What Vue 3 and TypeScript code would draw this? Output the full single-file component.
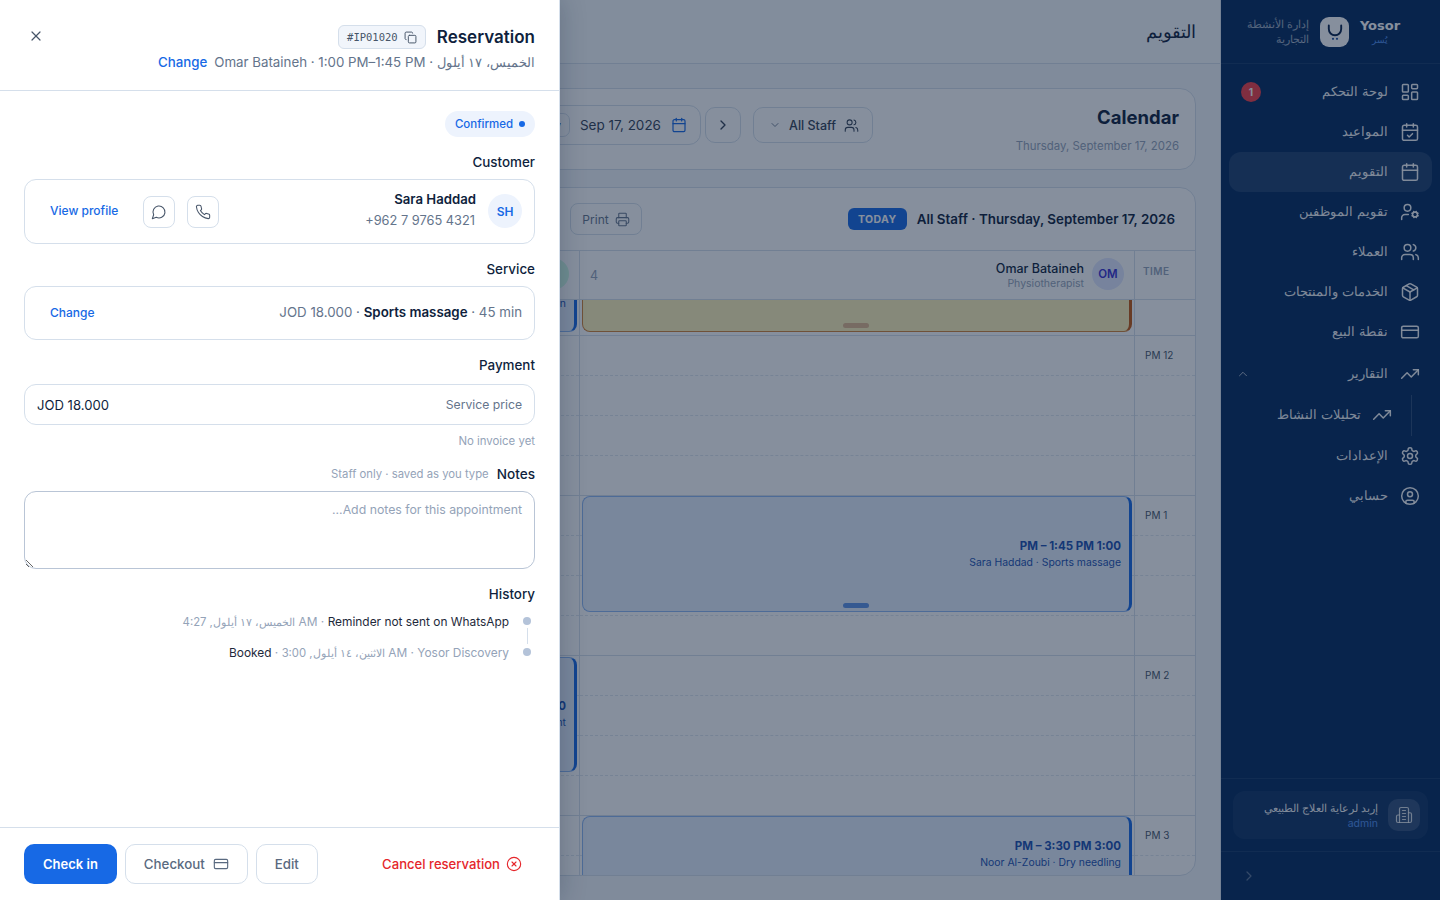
<script setup lang="ts">
import { h } from 'vue'

const icons: Record<string, string> = {
  dashboard: '<rect x="3" y="3" width="7" height="9" rx="1"/><rect x="14" y="3" width="7" height="5" rx="1"/><rect x="14" y="12" width="7" height="9" rx="1"/><rect x="3" y="16" width="7" height="5" rx="1"/>',
  calendarCheck: '<path d="M8 2v4"/><path d="M16 2v4"/><rect x="3" y="4" width="18" height="18" rx="2"/><path d="M3 10h18"/><path d="m9 16 2 2 4-4"/>',
  calendar: '<path d="M8 2v4"/><path d="M16 2v4"/><rect x="3" y="4" width="18" height="18" rx="2"/><path d="M3 10h18"/>',
  userCog: '<path d="M10 15H6a4 4 0 0 0-4 4v2"/><circle cx="9" cy="7" r="4"/><circle cx="18" cy="15" r="3"/><path d="m21.7 16.4-.9-.3"/><path d="m15.2 13.9-.9-.3"/><path d="m16.6 18.7.3-.9"/><path d="m19.1 12.2.3-.9"/><path d="m19.6 18.7-.4-1"/><path d="m16.8 12.3-.4-1"/><path d="m14.3 16.6 1-.4"/><path d="m20.7 13.8 1-.4"/>',
  users: '<path d="M16 21v-2a4 4 0 0 0-4-4H6a4 4 0 0 0-4 4v2"/><circle cx="9" cy="7" r="4"/><path d="M22 21v-2a4 4 0 0 0-3-3.87"/><path d="M16 3.13a4 4 0 0 1 0 7.75"/>',
  package: '<path d="M21 8a2 2 0 0 0-1-1.73l-7-4a2 2 0 0 0-2 0l-7 4A2 2 0 0 0 3 8v8a2 2 0 0 0 1 1.73l7 4a2 2 0 0 0 2 0l7-4A2 2 0 0 0 21 16Z"/><path d="m3.3 7 8.7 5 8.7-5"/><path d="M12 22V12"/><path d="m7.5 4.27 9 5.15"/>',
  card: '<rect x="2" y="5" width="20" height="14" rx="2"/><path d="M2 10h20"/>',
  trending: '<path d="m22 7-8.5 8.5-5-5L2 17"/><path d="M16 7h6v6"/>',
  settings: '<path d="M12.22 2h-.44a2 2 0 0 0-2 2v.18a2 2 0 0 1-1 1.73l-.43.25a2 2 0 0 1-2 0l-.15-.08a2 2 0 0 0-2.73.73l-.22.38a2 2 0 0 0 .73 2.73l.15.1a2 2 0 0 1 1 1.72v.51a2 2 0 0 1-1 1.74l-.15.09a2 2 0 0 0-.73 2.73l.22.38a2 2 0 0 0 2.73.73l.15-.08a2 2 0 0 1 2 0l.43.25a2 2 0 0 1 1 1.73V20a2 2 0 0 0 2 2h.44a2 2 0 0 0 2-2v-.18a2 2 0 0 1 1-1.73l.43-.25a2 2 0 0 1 2 0l.15.08a2 2 0 0 0 2.73-.73l.22-.39a2 2 0 0 0-.73-2.73l-.15-.08a2 2 0 0 1-1-1.74v-.5a2 2 0 0 1 1-1.74l.15-.09a2 2 0 0 0 .73-2.73l-.22-.38a2 2 0 0 0-2.73-.73l-.15.08a2 2 0 0 1-2 0l-.43-.25a2 2 0 0 1-1-1.73V4a2 2 0 0 0-2-2z"/><circle cx="12" cy="12" r="3"/>',
  account: '<circle cx="12" cy="12" r="10"/><circle cx="12" cy="10" r="3"/><path d="M7 20.662V19a2 2 0 0 1 2-2h6a2 2 0 0 1 2 2v1.662"/>',
  building: '<path d="M6 22V4a2 2 0 0 1 2-2h8a2 2 0 0 1 2 2v18Z"/><path d="M6 12H4a2 2 0 0 0-2 2v6a2 2 0 0 0 2 2h2"/><path d="M18 9h2a2 2 0 0 1 2 2v9a2 2 0 0 1-2 2h-2"/><path d="M10 6h4"/><path d="M10 10h4"/><path d="M10 14h4"/><path d="M10 18h4"/>',
  message: '<path d="M7.9 20A9 9 0 1 0 4 16.1L2 22Z"/>',
  phone: '<path d="M22 16.92v3a2 2 0 0 1-2.18 2 19.79 19.79 0 0 1-8.63-3.07 19.5 19.5 0 0 1-6-6 19.79 19.79 0 0 1-3.07-8.67A2 2 0 0 1 4.11 2h3a2 2 0 0 1 2 1.72 12.84 12.84 0 0 0 .7 2.81 2 2 0 0 1-.45 2.11L8.09 9.91a16 16 0 0 0 6 6l1.27-1.27a2 2 0 0 1 2.11-.45 12.84 12.84 0 0 0 2.81.7A2 2 0 0 1 22 16.92z"/>',
  copy: '<rect x="8" y="8" width="14" height="14" rx="2"/><path d="M4 16c-1.1 0-2-.9-2-2V4c0-1.1.9-2 2-2h10c1.1 0 2 .9 2 2"/>',
  circleX: '<circle cx="12" cy="12" r="10"/><path d="m15 9-6 6"/><path d="m9 9 6 6"/>',
  printer: '<path d="M6 18H4a2 2 0 0 1-2-2v-5a2 2 0 0 1 2-2h16a2 2 0 0 1 2 2v5a2 2 0 0 1-2 2h-2"/><path d="M6 9V3a1 1 0 0 1 1-1h10a1 1 0 0 1 1 1v6"/><rect x="6" y="14" width="12" height="8" rx="1"/>',
  x: '<path d="M18 6 6 18"/><path d="m6 6 12 12"/>',
  chevronUp: '<path d="m18 15-6-6-6 6"/>',
  chevronDown: '<path d="m6 9 6 6 6-6"/>',
  chevronRight: '<path d="m9 18 6-6-6-6"/>'
}

const Icon = (props: { name: string; size?: number; stroke?: number }) =>
  h('svg', {
    width: props.size ?? 16,
    height: props.size ?? 16,
    viewBox: '0 0 24 24',
    fill: 'none',
    stroke: 'currentColor',
    'stroke-width': props.stroke ?? 2,
    'stroke-linecap': 'round',
    'stroke-linejoin': 'round',
    style: 'flex:none;display:block',
    innerHTML: icons[props.name]
  })

interface NavItem {
  label: string
  icon: string
  active?: boolean
  badge?: number
}

const navItems: NavItem[] = [
  { label: 'لوحة التحكم', icon: 'dashboard', badge: 1 },
  { label: 'المواعيد', icon: 'calendarCheck' },
  { label: 'التقويم', icon: 'calendar', active: true },
  { label: 'تقويم الموظفين', icon: 'userCog' },
  { label: 'العملاء', icon: 'users' },
  { label: 'الخدمات والمنتجات', icon: 'package' },
  { label: 'نقطة البيع', icon: 'card' }
]

const hours = [
  { label: '', slots: [36] },
  { label: '12 PM', slots: [40, 40, 40, 40] },
  { label: '1 PM', slots: [40, 40, 40, 40] },
  { label: '2 PM', slots: [40, 40, 40, 40] },
  { label: '3 PM', slots: [40, 40, 40, 40] }
]

interface CalEvent {
  time: string
  who: string
  top: number
  height: number
  tone: 'blue' | 'amber'
  handle?: boolean
}

const omarEvents: CalEvent[] = [
  { time: '', who: '', top: -61, height: 93, tone: 'amber', handle: true },
  { time: '1:00 PM – 1:45 PM', who: 'Sara Haddad · Sports massage', top: 196, height: 116, tone: 'blue', handle: true },
  { time: '3:00 PM – 3:30 PM', who: 'Noor Al-Zoubi · Dry needling', top: 516, height: 76, tone: 'blue' }
]

const otherEvents: CalEvent[] = [
  { time: '', who: 'n', top: -26, height: 58, tone: 'blue' },
  { time: '2:00', who: 'nt', top: 357, height: 115, tone: 'blue' }
]
</script>

<template>
  <div class="app">
    <aside class="sidebar">
      <div class="brand">
        <div class="brand-name">
          <span class="brand-en">Yosor</span>
          <span class="brand-ar">يُسر</span>
        </div>
        <div class="logo">
          <svg width="18" height="20" viewBox="0 0 18 20" fill="none">
            <path d="M2.8 3.5v3.6a6.2 6.2 0 0 0 12.4 0V3.5" stroke="#06214a" stroke-width="1.9" stroke-linecap="round" />
            <circle cx="7" cy="16.8" r="1.1" fill="#1d4e9c" />
            <circle cx="11" cy="16.8" r="1.1" fill="#1d4e9c" />
          </svg>
        </div>
        <div class="brand-tag">إدارة الأنشطة<br />التجارية</div>
      </div>

      <nav class="nav">
        <a v-for="item in navItems" :key="item.label" class="nav-item" :class="{ active: item.active }">
          <Icon :name="item.icon" :size="20" :stroke="1.8" />
          <span class="nav-label">{{ item.label }}</span>
          <span v-if="item.badge" class="nav-badge">{{ item.badge }}</span>
        </a>
        <a class="nav-item group-head">
          <Icon name="trending" :size="20" :stroke="1.8" />
          <span class="nav-label">التقارير</span>
          <span class="nav-caret"><Icon name="chevronUp" :size="14" :stroke="1.6" /></span>
        </a>
        <div class="subnav">
          <a class="nav-item sub-item">
            <Icon name="trending" :size="20" :stroke="1.8" />
            <span class="nav-label">تحليلات النشاط</span>
          </a>
        </div>
        <a class="nav-item">
          <Icon name="settings" :size="20" :stroke="1.8" />
          <span class="nav-label">الإعدادات</span>
        </a>
        <a class="nav-item">
          <Icon name="account" :size="20" :stroke="1.8" />
          <span class="nav-label">حسابي</span>
        </a>
      </nav>

      <div class="tenant-wrap">
        <div class="tenant">
          <div class="tenant-icon"><Icon name="building" :size="18" :stroke="1.6" /></div>
          <div class="tenant-text">
            <div class="tenant-name">إربد لرعاية العلاج الطبيعي</div>
            <div class="tenant-role">admin</div>
          </div>
        </div>
      </div>
      <div class="collapse"><Icon name="chevronRight" :size="16" :stroke="1.8" /></div>
    </aside>

    <main class="main">
      <header class="topbar">
        <h1>التقويم</h1>
      </header>

      <div class="content">
        <section class="toolbar">
          <div class="toolbar-title">
            <h2>Calendar</h2>
            <p>Thursday, September 17, 2026</p>
          </div>
          <div class="toolbar-controls">
            <button class="btn-ghost staff-select">
              <Icon name="users" :size="15" :stroke="1.7" />
              <span>All Staff</span>
              <span class="select-caret"><Icon name="chevronDown" :size="12" :stroke="1.8" /></span>
            </button>
            <button class="btn-ghost square"><Icon name="chevronRight" :size="16" /></button>
            <div class="date-chip">
              <span class="date-icon"><Icon name="calendar" :size="16" :stroke="1.8" /></span>
              <span class="date-text">Sep 17, 2026</span>
              <button class="today-btn">Today</button>
            </div>
          </div>
        </section>

        <section class="schedule">
          <div class="schedule-head">
            <div class="schedule-title">
              <strong>All Staff · Thursday, September 17, 2026</strong>
              <span class="today-badge">TODAY</span>
            </div>
            <div class="schedule-actions">
              <button class="btn-print">
                <Icon name="printer" :size="15" :stroke="1.7" />
                <span>Print</span>
              </button>
            </div>
          </div>

          <div class="columns">
            <div class="col-time col-head"><span class="time-head">TIME</span></div>
            <div class="col-head staff-head">
              <span class="avatar-sm violet">OM</span>
              <div class="staff-text">
                <div class="staff-name">Omar Bataineh</div>
                <div class="staff-role">Physiotherapist</div>
              </div>
              <span class="staff-count">4</span>
            </div>
            <div class="col-head staff-head">
              <span class="avatar-sm teal"></span>
            </div>
          </div>

          <div class="grid-body">
            <div class="columns">
              <div class="col-time">
                <div v-for="hour in hours" :key="hour.label" class="hour">
                  <div v-for="(slot, i) in hour.slots" :key="i" class="slot" :style="{ height: slot + 'px' }">
                    <span v-if="i === 0 && hour.label" class="hour-label">{{ hour.label }}</span>
                  </div>
                </div>
              </div>
              <div class="col-staff">
                <div v-for="hour in hours" :key="hour.label" class="hour">
                  <div v-for="(slot, i) in hour.slots" :key="i" class="slot" :style="{ height: slot + 'px' }"></div>
                </div>
                <div
                  v-for="ev in omarEvents"
                  :key="ev.top"
                  class="event"
                  :class="ev.tone"
                  :style="{ top: ev.top + 'px', height: ev.height + 'px' }"
                >
                  <div class="ev-time">{{ ev.time }}</div>
                  <div class="ev-who">{{ ev.who }}</div>
                  <span v-if="ev.handle" class="ev-handle"></span>
                </div>
              </div>
              <div class="col-staff">
                <div v-for="hour in hours" :key="hour.label" class="hour">
                  <div v-for="(slot, i) in hour.slots" :key="i" class="slot" :style="{ height: slot + 'px' }"></div>
                </div>
                <div
                  v-for="ev in otherEvents"
                  :key="ev.top"
                  class="event"
                  :class="ev.tone"
                  :style="{ top: ev.top + 'px', height: ev.height + 'px' }"
                >
                  <div class="ev-time">{{ ev.time }}</div>
                  <div class="ev-who">{{ ev.who }}</div>
                </div>
              </div>
            </div>
          </div>
        </section>
      </div>
    </main>

    <div class="scrim"></div>

    <aside class="drawer">
      <header class="drawer-head">
        <div class="head-row">
          <h3>Reservation</h3>
          <span class="code-chip">
            <Icon name="copy" :size="13" :stroke="1.8" />
            <span class="code">#IP01020</span>
          </span>
          <button class="close"><Icon name="x" :size="16" :stroke="1.8" /></button>
        </div>
        <div class="head-sub">
          <span><span class="ar-head">الخميس، ١٧ أيلول</span> · Omar Bataineh · 1:00 PM–1:45 PM</span>
          <a class="link-strong">Change</a>
        </div>
      </header>

      <div class="drawer-body">
        <div class="status-row">
          <span class="status"><i class="status-dot"></i>Confirmed</span>
        </div>

        <div class="field-label">Customer</div>
        <div class="box customer">
          <span class="avatar">SH</span>
          <div class="cust-text">
            <div class="cust-name">Sara Haddad</div>
            <div class="cust-phone" dir="ltr">+962 7 9765 4321</div>
          </div>
          <div class="cust-actions">
            <button class="icon-btn"><Icon name="phone" :size="16" :stroke="1.6" /></button>
            <button class="icon-btn"><Icon name="message" :size="16" :stroke="1.6" /></button>
            <a class="link">View profile</a>
          </div>
        </div>

        <div class="field-label">Service</div>
        <div class="box service">
          <span class="svc-text" dir="ltr">JOD 18.000 · <b>Sports massage</b> · 45 min</span>
          <a class="link">Change</a>
        </div>

        <div class="field-label">Payment</div>
        <div class="box payment">
          <span class="pay-label">Service price</span>
          <span class="pay-value">JOD 18.000</span>
        </div>
        <div class="no-invoice">No invoice yet</div>

        <div class="notes-head">
          <span class="notes-label">Notes</span>
          <span class="notes-hint">Staff only · saved as you type</span>
        </div>
        <textarea class="notes" placeholder="Add notes for this appointment..."></textarea>

        <div class="field-label">History</div>
        <ul class="history">
          <li>
            <i class="hist-dot"></i>
            <span class="hist-text" dir="ltr"><span class="muted"><span class="ar-hist">الخميس، ١٧ أيلول, 4:27</span> AM · </span>Reminder not sent on WhatsApp</span>
          </li>
          <li>
            <i class="hist-dot"></i>
            <span class="hist-text" dir="ltr">Booked<span class="muted"> · <span class="ar-hist">الاثنين، ١٤ أيلول, 3:00</span> AM · Yosor Discovery</span></span>
          </li>
        </ul>
      </div>

      <footer class="drawer-foot">
        <button class="cancel">
          <Icon name="circleX" :size="16" :stroke="1.7" />
          <span>Cancel reservation</span>
        </button>
        <div class="foot-actions">
          <button class="foot-btn">Edit</button>
          <button class="foot-btn checkout">
            <Icon name="card" :size="16" :stroke="1.7" />
            <span>Checkout</span>
          </button>
          <button class="foot-primary">Check in</button>
        </div>
      </footer>
    </aside>
  </div>
</template>

<style>
html,
body {
  margin: 0;
  height: 100%;
  overflow: hidden;
}
</style>

<style scoped>
.app {
  position: relative;
  display: flex;
  height: 900px;
  overflow: hidden;
  direction: rtl;
  background: #f3f7fb;
  color: #0f1f3d;
  font-family: Inter, sans-serif;
  font-size: 13.3px;
}
button {
  font-family: inherit;
  cursor: pointer;
}
h1,
h2,
h3,
p,
ul {
  margin: 0;
  padding: 0;
}

/* sidebar */
.sidebar {
  flex: 0 0 220px;
  box-sizing: border-box;
  display: flex;
  flex-direction: column;
  background: #03295d;
  border-left: 1px solid #dbe4ee;
}
.brand {
  height: 64px;
  box-sizing: border-box;
  display: flex;
  align-items: center;
  border-bottom: 1px solid rgba(255, 255, 255, 0.07);
  padding-right: 40px;
}
.brand-name {
  width: 40px;
  display: flex;
  flex-direction: column;
  align-items: center;
  color: #fff;
}
.brand-en {
  font-family: "DejaVu Sans", sans-serif;
  font-weight: 700;
  font-size: 13px;
  line-height: 16px;
}
.brand-ar {
  font-size: 9px;
  line-height: 11px;
  color: #4f8fef;
}
.logo {
  width: 29px;
  height: 30px;
  flex: none;
  margin-right: 11px;
  border-radius: 9px;
  background: #fff;
  display: flex;
  align-items: center;
  justify-content: center;
}
.brand-tag {
  flex: none;
  margin-right: 11px;
  font-size: 10.7px;
  line-height: 15px;
  white-space: nowrap;
  color: rgba(255, 255, 255, 0.6);
}
.nav {
  flex: 1;
  padding: 8px 8px 0;
}
.nav-item {
  display: flex;
  align-items: center;
  gap: 12px;
  height: 40px;
  padding: 0 12px;
  border-radius: 12px;
  color: rgba(255, 255, 255, 0.95);
}
.nav-item.active {
  background: rgba(255, 255, 255, 0.1);
}
.nav-label {
  flex: 1;
  margin-top: -3px;
  font-size: 13px;
}
.nav-badge {
  width: 20px;
  height: 20px;
  border-radius: 50%;
  background: #f33c45;
  color: #fff;
  font-size: 10px;
  font-weight: 700;
  display: flex;
  align-items: center;
  justify-content: center;
}
.group-head {
  margin-top: 2px;
}
.nav-caret {
  margin-left: -5px;
  color: rgba(255, 255, 255, 0.7);
}
.subnav {
  margin: 1px 20px 0 0;
  padding-right: 9px;
  height: 41px;
  border-right: 1px solid rgba(255, 255, 255, 0.16);
}
.sub-item {
  padding-right: 10px;
  gap: 11px;
}
.tenant-wrap {
  border-top: 1px solid rgba(255, 255, 255, 0.07);
  border-bottom: 1px solid rgba(255, 255, 255, 0.07);
  padding: 12px;
}
.tenant {
  display: flex;
  align-items: center;
  gap: 10px;
  height: 48px;
  padding: 0 8px;
  border-radius: 12px;
  background: rgba(255, 255, 255, 0.05);
}
.tenant-icon {
  width: 32px;
  height: 32px;
  flex: none;
  border-radius: 10px;
  background: rgba(255, 255, 255, 0.14);
  display: flex;
  align-items: center;
  justify-content: center;
  color: rgba(255, 255, 255, 0.8);
}
.tenant-name {
  font-size: 11px;
  line-height: 17px;
  white-space: nowrap;
  color: rgba(255, 255, 255, 0.95);
}
.tenant-role {
  font-size: 10.5px;
  line-height: 13px;
  color: #4f8fef;
}
.collapse {
  height: 48px;
  display: flex;
  align-items: center;
  justify-content: flex-end;
  padding-left: 20px;
  color: rgba(255, 255, 255, 0.35);
}

/* main page behind the drawer */
.main {
  flex: 1;
  min-width: 0;
  display: flex;
  flex-direction: column;
}
.topbar {
  height: 64px;
  box-sizing: border-box;
  flex: none;
  display: flex;
  align-items: center;
  padding: 0 24px;
  background: #f7fafd;
  border-bottom: 1px solid #d5dfeb;
}
.topbar h1 {
  font-size: 18px;
  font-weight: 500;
}
.content {
  flex: 1;
  display: flex;
  flex-direction: column;
  gap: 17px;
  padding: 24px;
  min-height: 0;
}
.toolbar {
  height: 82px;
  box-sizing: border-box;
  flex: none;
  display: flex;
  align-items: center;
  padding: 0 16px;
  background: #fff;
  border: 1px solid #d5dfeb;
  border-radius: 16px;
}
.toolbar-title {
  flex: 0 0 306px;
}
.toolbar-title h2 {
  font-size: 18.5px;
  line-height: 26px;
  font-weight: 700;
}
.toolbar-title p {
  margin-top: 8px;
  font-size: 11.4px;
  line-height: 16px;
  color: #94a3b8;
}
.toolbar-controls {
  flex: 1;
  display: flex;
  align-items: center;
  gap: 4px;
  margin-bottom: 8px;
}
.btn-ghost {
  height: 36px;
  box-sizing: border-box;
  display: flex;
  align-items: center;
  background: #fff;
  color: #334155;
  border: 1px solid #d5dfeb;
  border-radius: 10px;
}
.staff-select {
  width: 120px;
  gap: 8px;
  padding: 0 13px 0 0;
  margin-left: 8px;
  font-size: 12.5px;
  font-weight: 500;
}
.select-caret {
  color: #64748b;
}
.square {
  width: 36px;
  justify-content: center;
  padding: 0;
}
.date-chip {
  flex: none;
  height: 40px;
  box-sizing: border-box;
  display: flex;
  align-items: center;
  gap: 10px;
  padding: 0 13px 0 4px;
  border: 1px solid #d5dfeb;
  border-radius: 12px;
  background: #fff;
}
.date-icon {
  color: #1769e5;
}
.date-text {
  font-size: 13.5px;
  color: #334155;
  direction: ltr;
}
.today-btn {
  height: 24px;
  padding: 0 8px;
  font-size: 12px;
  background: #fff;
  color: #334155;
  border: 1px solid #d5dfeb;
  border-radius: 7px;
}
.schedule {
  flex: 1;
  min-height: 0;
  display: flex;
  flex-direction: column;
  background: #fff;
  border: 1px solid #d5dfeb;
  border-radius: 16px;
  overflow: hidden;
}
.schedule-head {
  height: 63px;
  box-sizing: border-box;
  flex: none;
  display: flex;
  align-items: center;
  padding: 0 20px 0 16px;
  border-bottom: 1px solid #d5dfeb;
}
.schedule-title {
  flex: 1;
  display: flex;
  align-items: center;
  gap: 10px;
}
.schedule-title strong {
  font-size: 13.4px;
  font-weight: 600;
}
.today-badge {
  width: 59px;
  height: 22px;
  border-radius: 6px;
  background: #1769e5;
  color: #fff;
  font-size: 10.5px;
  font-weight: 700;
  letter-spacing: 0.4px;
  display: flex;
  align-items: center;
  justify-content: center;
}
.schedule-actions {
  flex: 0 0 601px;
}
.btn-print {
  width: 72px;
  height: 32px;
  box-sizing: border-box;
  display: flex;
  align-items: center;
  justify-content: center;
  gap: 6px;
  background: #fff;
  border: 1px solid #d5dfeb;
  border-radius: 8px;
  color: #64748b;
  font-size: 12px;
}
.columns {
  display: grid;
  grid-template-columns: 61px 555px 555px;
}
.col-head {
  height: 49px;
  box-sizing: border-box;
  border-bottom: 1px solid #d5dfeb;
}
.col-time {
  border-left: 1px solid #d5dfeb;
  box-sizing: border-box;
}
.time-head {
  display: block;
  margin-top: 14px;
  padding-left: 8px;
  text-align: left;
  font-size: 10px;
  font-weight: 600;
  letter-spacing: 0.5px;
  color: #94a3b8;
}
.staff-head {
  display: flex;
  align-items: center;
  gap: 8px;
  padding: 0 10px 0 10px;
  border-left: 1px solid #d5dfeb;
}
.avatar-sm {
  width: 32px;
  height: 32px;
  margin-top: -3px;
  flex: none;
  border-radius: 50%;
  display: flex;
  align-items: center;
  justify-content: center;
  font-size: 11.5px;
  font-weight: 600;
}
.violet {
  background: #e0e7ff;
  color: #3730d0;
}
.teal {
  background: #d1fae5;
}
.staff-text {
  flex: 1;
  padding-top: 2px;
}
.staff-name {
  font-size: 12.5px;
  line-height: 16px;
  font-weight: 500;
}
.staff-role {
  font-size: 10.5px;
  line-height: 14px;
  color: #94a3b8;
}
.staff-count {
  font-size: 12.5px;
  color: #94a3b8;
}
.grid-body {
  flex: 1;
  min-height: 0;
  overflow: hidden;
}
.col-staff {
  position: relative;
  border-left: 1px solid #d5dfeb;
}
.slot {
  box-sizing: border-box;
  border-bottom: 1px dashed #dfe6ef;
}
.slot:last-child {
  border-bottom: 1px solid #d5dfeb;
}
.hour-label {
  display: block;
  padding: 13px 0 0 10px;
  text-align: left;
  font-size: 10px;
  color: #475569;
}
.event {
  position: absolute;
  left: 2px;
  right: 2px;
  box-sizing: border-box;
  display: flex;
  flex-direction: column;
  justify-content: center;
  padding: 0 8px 0 7px;
  border: 1px solid;
  border-right-width: 3px;
  border-radius: 8px;
  overflow: hidden;
}
.event.blue {
  background: #e4effd;
  border-color: #8db6f3;
  border-right-color: #1769e5;
  color: #1a4fb0;
}
.event.amber {
  background: #fff3b8;
  border-color: #d18237;
  border-right-color: #c2570f;
}
.ev-time {
  font-size: 11.5px;
  line-height: 16px;
  font-weight: 700;
}
.ev-who {
  margin-top: 1px;
  font-size: 10.4px;
  line-height: 16px;
  white-space: nowrap;
}
.ev-handle {
  position: absolute;
  left: 50%;
  bottom: 3px;
  width: 26px;
  height: 5px;
  margin-left: -13px;
  border-radius: 3px;
}
.event.amber .ev-handle {
  background: #e0b78a;
}
.event.blue .ev-handle {
  background: #5d92e6;
}

.scrim {
  position: absolute;
  inset: 0;
  background: rgba(13, 31, 59, 0.5);
}

/* reservation drawer */
.drawer {
  position: absolute;
  top: 0;
  bottom: 0;
  left: 0;
  width: 560px;
  box-sizing: border-box;
  display: flex;
  flex-direction: column;
  background: #fff;
  border-right: 1px solid #d5dfeb;
  box-shadow: 0 0 24px rgba(13, 31, 59, 0.25);
}
.drawer-head {
  height: 91px;
  box-sizing: border-box;
  flex: none;
  padding: 25px 24px 0;
  border-bottom: 1px solid #d5dfeb;
}
.head-row {
  display: flex;
  align-items: center;
  gap: 11px;
  height: 24px;
}
.head-row h3 {
  font-size: 17px;
  line-height: 24px;
  font-weight: 600;
}
.code-chip {
  height: 24px;
  width: 88px;
  box-sizing: border-box;
  display: flex;
  align-items: center;
  justify-content: center;
  gap: 6px;
  background: #f1f5fb;
  border: 1px solid #d5dfeb;
  border-radius: 6px;
  color: #475569;
}
.code {
  font-family: "DejaVu Sans Mono", monospace;
  font-size: 10.5px;
  direction: ltr;
}
.close {
  margin-right: auto;
  margin-top: -2px;
  width: 24px;
  height: 24px;
  display: flex;
  align-items: center;
  justify-content: center;
  padding: 0;
  background: none;
  border: none;
  color: #475569;
}
.head-sub {
  margin-top: 3px;
  height: 20px;
  display: flex;
  align-items: center;
  gap: 7px;
  font-size: 13.3px;
  color: #64748b;
}
.ar-head {
  font-size: 12.9px;
}
.link-strong {
  color: #1769e5;
  font-weight: 500;
}
.drawer-body {
  flex: 1;
  min-height: 0;
  padding: 20px 24px 0;
}
.status-row {
  display: flex;
}
.status {
  height: 26px;
  width: 90px;
  box-sizing: border-box;
  display: flex;
  align-items: center;
  justify-content: center;
  gap: 6px;
  background: #edf3fd;
  border-radius: 13px;
  color: #1769e5;
  font-size: 11.5px;
  font-weight: 500;
}
.status-dot {
  width: 6px;
  height: 6px;
  border-radius: 50%;
  background: #1769e5;
}
.field-label {
  margin-top: 15px;
  height: 20px;
  line-height: 20px;
  font-size: 13.4px;
  font-weight: 500;
}
.box {
  margin-top: 7px;
  box-sizing: border-box;
  display: flex;
  align-items: center;
  padding: 0 12px;
  background: #fff;
  border: 1px solid #d5dfeb;
  border-radius: 12px;
}
.customer {
  height: 65px;
}
.avatar {
  width: 34px;
  height: 34px;
  margin-top: -1px;
  flex: none;
  border-radius: 50%;
  background: #edf3fd;
  color: #1769e5;
  font-size: 12px;
  font-weight: 600;
  display: flex;
  align-items: center;
  justify-content: center;
}
.cust-text {
  margin: -4px 12px 0 0;
  flex: 1;
}
.cust-name {
  font-size: 13.2px;
  line-height: 20px;
  font-weight: 600;
}
.cust-phone {
  margin-top: 3px;
  padding-right: 1px;
  font-size: 12.8px;
  line-height: 18px;
  color: #64748b;
  text-align: right;
}
.cust-actions {
  display: flex;
  align-items: center;
  gap: 12px;
}
.icon-btn {
  width: 32px;
  height: 32px;
  padding: 0;
  display: flex;
  align-items: center;
  justify-content: center;
  background: #fff;
  border: 1px solid #d5dfeb;
  border-radius: 8px;
  color: #475569;
}
.link {
  padding: 0 13px 2px;
  color: #1769e5;
  font-size: 12px;
  font-weight: 500;
}
.service {
  height: 54px;
  justify-content: space-between;
}
.svc-text {
  margin-top: -2px;
  color: #64748b;
  font-size: 13.3px;
}
.svc-text b {
  color: #0f1f3d;
  font-weight: 600;
}
.payment {
  height: 41px;
  margin-top: 9px;
  justify-content: space-between;
}
.pay-label {
  color: #64748b;
  font-size: 12.2px;
}
.pay-value {
  font-size: 13.1px;
  direction: ltr;
}
.no-invoice {
  margin-top: 8px;
  height: 16px;
  line-height: 16px;
  font-size: 11.4px;
  color: #94a3b8;
}
.notes-head {
  margin-top: 15px;
  height: 20px;
  display: flex;
  align-items: center;
  gap: 8px;
}
.notes-label {
  font-size: 13.6px;
  font-weight: 500;
}
.notes-hint {
  font-size: 11.3px;
  color: #94a3b8;
}
.notes {
  display: block;
  width: 100%;
  height: 78px;
  box-sizing: border-box;
  margin-top: 7px;
  padding: 9px 12px;
  border: 1px solid #b9c5d6;
  border-radius: 12px;
  font-family: inherit;
  font-size: 12.3px;
  line-height: 18px;
  color: #0f1f3d;
  outline: none;
}
.notes::placeholder {
  color: #94a3b8;
}
.history {
  margin-top: 7px;
  list-style: none;
  display: flex;
  flex-direction: column;
  gap: 11px;
}
.history li {
  position: relative;
  display: flex;
  align-items: center;
  gap: 14px;
  height: 20px;
  padding-right: 4px;
  font-size: 11.9px;
}
.history li:first-child::after {
  content: "";
  position: absolute;
  right: 7px;
  top: 17px;
  height: 16px;
  width: 1px;
  background: #d5dfeb;
}
.hist-dot {
  width: 8px;
  height: 8px;
  flex: none;
  border-radius: 50%;
  background: #b4c3d9;
}
.hist-text {
  color: #1e293b;
}
.ar-hist {
  font-size: 11.3px;
}
.muted {
  color: #94a3b8;
}
.drawer-foot {
  height: 73px;
  box-sizing: border-box;
  flex: none;
  display: flex;
  align-items: center;
  justify-content: space-between;
  padding: 0 24px;
  border-top: 1px solid #d5dfeb;
}
.cancel {
  display: flex;
  align-items: center;
  gap: 6px;
  height: 40px;
  padding: 0 13px;
  background: none;
  border: none;
  color: #e5262b;
  font-size: 13.1px;
  font-weight: 500;
}
.foot-actions {
  display: flex;
  align-items: center;
  gap: 8px;
}
.foot-btn {
  height: 40px;
  box-sizing: border-box;
  padding: 0 18px;
  display: flex;
  align-items: center;
  gap: 8px;
  background: #fff;
  border: 1px solid #d5dfeb;
  border-radius: 10px;
  color: #5a6a80;
  font-size: 13.3px;
  font-weight: 500;
}
.foot-primary {
  height: 40px;
  padding: 0 19px;
  background: #1769e5;
  border: none;
  border-radius: 10px;
  color: #fff;
  font-size: 13px;
  font-weight: 600;
}
</style>
